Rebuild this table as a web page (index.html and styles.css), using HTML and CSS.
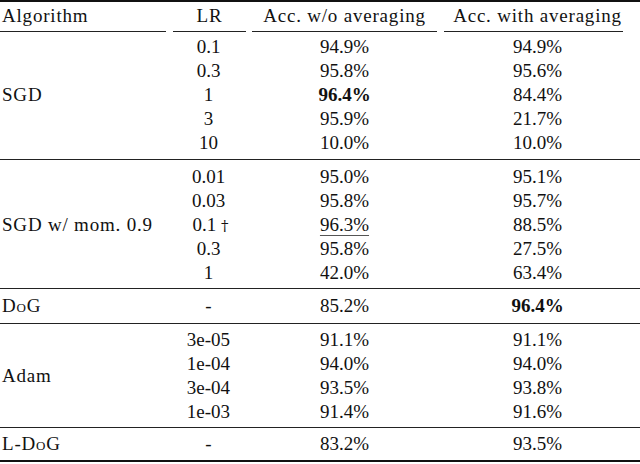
FILE: index.html
```html
<!DOCTYPE html>
<html>
<head>
<meta charset="utf-8">
<link rel="stylesheet" href="styles.css">
</head>
<body>
<div class="tbl">
  <div class="head">
    <div class="hc"><div class="h h1 txt">Algorithm</div></div>
    <div class="hc"><div class="h h2 txt">LR</div></div>
    <div class="hc"><div class="h h3 txt">Acc. w/o averaging</div></div>
    <div class="hc"><div class="h h4 txt">Acc. with averaging</div></div>
  </div>

  <div class="sec s1">
    <div class="alg txt">SGD</div>
    <div class="rows">
      <div class="row"><span>0.1</span><span>94.9%</span><span>94.9%</span></div>
      <div class="row"><span>0.3</span><span>95.8%</span><span>95.6%</span></div>
      <div class="row"><span>1</span><span class="b">96.4%</span><span>84.4%</span></div>
      <div class="row"><span>3</span><span>95.9%</span><span>21.7%</span></div>
      <div class="row"><span>10</span><span>10.0%</span><span>10.0%</span></div>
    </div>
  </div>

  <div class="sec s2">
    <div class="alg txt">SGD w/ mom. 0.9</div>
    <div class="rows">
      <div class="row"><span>0.01</span><span>95.0%</span><span>95.1%</span></div>
      <div class="row"><span>0.03</span><span>95.8%</span><span>95.7%</span></div>
      <div class="row"><span class="dgc">0.1 <span class="dg">&#8224;&#xFE0E;</span></span><span><span class="u">96.3%</span></span><span>88.5%</span></div>
      <div class="row"><span>0.3</span><span>95.8%</span><span>27.5%</span></div>
      <div class="row"><span>1</span><span>42.0%</span><span>63.4%</span></div>
    </div>
  </div>

  <div class="sec s3">
    <div class="alg txt">D<span class="sc">o</span>G</div>
    <div class="rows">
      <div class="row"><span>-</span><span>85.2%</span><span class="b">96.4%</span></div>
    </div>
  </div>

  <div class="sec s4">
    <div class="alg txt">Adam</div>
    <div class="rows">
      <div class="row"><span>3e-05</span><span>91.1%</span><span>91.1%</span></div>
      <div class="row"><span>1e-04</span><span>94.0%</span><span>94.0%</span></div>
      <div class="row"><span>3e-04</span><span>93.5%</span><span>93.8%</span></div>
      <div class="row"><span>1e-03</span><span>91.4%</span><span>91.6%</span></div>
    </div>
  </div>

  <div class="sec s5">
    <div class="alg txt">L-D<span class="sc">o</span>G</div>
    <div class="rows">
      <div class="row"><span>-</span><span>83.2%</span><span>93.5%</span></div>
    </div>
  </div>
</div>
</body>
</html>
```

FILE: styles.css
```css
html, body {
  margin: 0;
  padding: 0;
  background: #ffffff;
}

body {
  width: 640px;
  height: 464px;
  overflow: hidden;
  font-family: "Liberation Serif", "Times New Roman", serif;
  font-size: 19px;
  color: #111111;
}

.tbl {
  width: 640px;
  border-top: 2px solid #111111;
  border-bottom: 2px solid #111111;
}

.txt {
  letter-spacing: 0.8px;
}

.head {
  display: grid;
  grid-template-columns: 169px 79px 193px 193px;
  padding-top: 2px;
}

.h {
  line-height: 24px;
  padding-bottom: 3px;
  border-bottom: 1px solid #222222;
  text-align: center;
  white-space: nowrap;
}

.h1 {
  text-align: left;
  margin-right: 3px;
  padding-left: 2px;
}

.h2 {
  margin-left: 4px;
  margin-right: 2px;
}

.h3 {
  margin-left: 4px;
  margin-right: 4px;
}

.h4 {
  margin-left: 3px;
  margin-right: 11px;
  padding-left: 8px;
}

.sec {
  display: flex;
  padding: 4px 0 4px 0;
  border-top: 1px solid #222222;
}

.s1 {
  border-top: none;
  padding-top: 3px;
}

.s2 {
  padding-top: 5px;
  padding-bottom: 3px;
}

.s3 {
  padding-top: 5px;
  padding-bottom: 5px;
}

.s4 {
  padding-top: 4px;
  padding-bottom: 3px;
}

.alg {
  width: 167px;
  padding-left: 2px;
  display: flex;
  align-items: center;
  white-space: nowrap;
}

.rows {
  display: flex;
  flex-direction: column;
}

.row {
  display: grid;
  grid-template-columns: 79px 193px 193px;
  height: 24px;
  line-height: 24px;
  text-align: center;
  white-space: nowrap;
}

.dgc {
  padding-left: 4px;
}

.dg {
  font-family: "DejaVu Serif", "Liberation Serif", serif;
  font-size: 15px;
  color: #111111;
  font-variant-emoji: text;
}

.b {
  font-weight: bold;
}

.u {
  text-decoration: underline;
  text-decoration-thickness: 1px;
  text-underline-offset: 4px;
  text-decoration-color: #555555;
}

.sc {
  font-variant: small-caps;
}
```
